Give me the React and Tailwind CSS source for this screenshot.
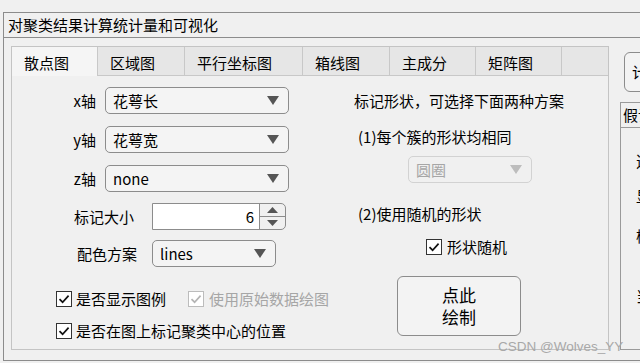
const FONT = { fontFamily: "'Noto Sans CJK SC', 'Noto Sans', sans-serif" }

function Arrow({ color = '#555' }) {
  return (
    <svg width="12" height="9" viewBox="0 0 12 9" className="shrink-0">
      <path d="M0 0 H12 L6 9 Z" fill={color} />
    </svg>
  )
}

function Dropdown({ value, width, disabled = false }) {
  return (
    <div
      className={`flex items-center justify-between h-[27px] rounded-[5px] border pl-[7px] pr-[9px] ${
        disabled ? 'border-[#d2d2d2] bg-[#f0f0f0] text-[#a6a6a6]' : 'border-[#8c8c8c] bg-[#f4f4f4] text-black'
      }`}
      style={{ width }}
    >
      <span className="leading-[20px]">{value}</span>
      <Arrow color={disabled ? '#bdbdbd' : '#555'} />
    </div>
  )
}

function Check({ disabled = false }) {
  return (
    <span
      className={`flex items-center justify-center w-[16px] h-[16px] shrink-0 border bg-white ${
        disabled ? 'border-[#bcbcbc]' : 'border-[#333]'
      }`}
    >
      <svg width="12" height="12" viewBox="0 0 12 12">
        <path d="M1.5 6.2 L4.6 9.2 L10.6 2.6" fill="none" stroke={disabled ? '#b4b4b4' : '#111'} strokeWidth="1.7" />
      </svg>
    </span>
  )
}

function Spinner() {
  return (
    <div className="flex h-[27px] w-[134px] border border-[#8c8c8c] rounded-r-[5px]">
      <div className="flex-1 bg-white flex items-center justify-end pr-[5px] leading-[20px]">6</div>
      <div className="w-[26px] flex flex-col border-l border-[#8c8c8c]">
        <div className="flex-1 flex items-center justify-center border-b border-[#8c8c8c]">
          <svg width="11" height="6" viewBox="0 0 11 6"><path d="M0 6 H11 L5.5 0 Z" fill="#555" /></svg>
        </div>
        <div className="flex-1 flex items-center justify-center">
          <svg width="11" height="6" viewBox="0 0 11 6"><path d="M0 0 H11 L5.5 6 Z" fill="#555" /></svg>
        </div>
      </div>
    </div>
  )
}

const tabs = [
  ['散点图', 86],
  ['区域图', 87],
  ['平行坐标图', 118],
  ['箱线图', 87],
  ['主成分', 86],
  ['矩阵图', 86],
]

function AxisRow({ label, value, top }) {
  return (
    <div className="flex items-center" style={{ marginTop: top }}>
      <span className="w-[84px] text-right leading-[20px]">{label}</span>
      <span className="ml-[9px]">
        <Dropdown value={value} width={184} />
      </span>
    </div>
  )
}

export default function App() {
  return (
    <div className="relative w-[640px] h-[363px] overflow-hidden bg-[#f0f0f0] text-black text-[15px]" style={FONT}>
      <div className="ml-[3px] mt-[12px] w-[700px] h-[349px] border border-[#8c8c8c] flex flex-col">
        {/* title */}
        <div className="h-[25px] border-b border-[#8c8c8c] pl-[4px] leading-[24px]">对聚类结果计算统计量和可视化</div>

        <div className="flex pt-[8px] pl-[7px]">
          {/* tab group */}
          <div className="w-[598px] h-[304px] border border-[#c4c4c4] flex flex-col shrink-0">
            <div className="flex h-[29px]">
              {tabs.map(([t, w], i) => (
                <div
                  key={t}
                  className={`flex items-center pl-[12px] pt-[3px] border-r border-[#c8c8c8] leading-[20px] ${
                    i === 0 ? 'bg-[#f5f5f5]' : 'bg-[#e6e6e6] border-b'
                  }`}
                  style={{ width: w }}
                >
                  {t}
                </div>
              ))}
              <div className="flex-1 bg-[#e6e6e6] border-b border-[#c8c8c8]" />
            </div>

            <div className="flex flex-1">
              {/* left column */}
              <div className="w-[328px] flex flex-col">
                <AxisRow label="x轴" value="花萼长" top={11} />
                <AxisRow label="y轴" value="花萼宽" top={12} />
                <AxisRow label="z轴" value="none" top={12} />

                <div className="flex items-center mt-[11px]">
                  <span className="ml-[62px] w-[78px] leading-[20px]">标记大小</span>
                  <Spinner />
                </div>

                <div className="flex items-center mt-[10px]">
                  <span className="ml-[65px] w-[75px] leading-[20px]">配色方案</span>
                  <Dropdown value="lines" width={124} />
                </div>

                <div className="flex items-center mt-[24px] ml-[44px] h-[16px]">
                  <Check />
                  <span className="ml-[4px] leading-[20px]">是否显示图例</span>
                  <span className="ml-[22px]">
                    <Check disabled />
                  </span>
                  <span className="ml-[5px] leading-[20px] text-[#a6a6a6] whitespace-nowrap">使用原始数据绘图</span>
                </div>

                <div className="flex items-center mt-[16px] ml-[44px] h-[16px]">
                  <Check />
                  <span className="ml-[4px] leading-[20px]">是否在图上标记聚类中心的位置</span>
                </div>
              </div>

              {/* right column */}
              <div className="flex flex-col">
                <div className="ml-[14px] mt-[15px] leading-[20px]">标记形状，可选择下面两种方案</div>
                <div className="ml-[18px] mt-[16px] leading-[20px]">(1)每个簇的形状均相同</div>
                <div className="ml-[68px] mt-[9px]">
                  <Dropdown value="圆圈" width={124} disabled />
                </div>
                <div className="ml-[18px] mt-[21px] leading-[20px]">(2)使用随机的形状</div>
                <div className="flex items-center ml-[86px] mt-[15px] h-[16px]">
                  <Check />
                  <span className="ml-[5px] leading-[20px]">形状随机</span>
                </div>
                <div className="ml-[57px] mt-[21px] w-[124px] h-[60px] border border-[#8c8c8c] rounded-[6px] bg-[#f3f3f3] flex items-center justify-center text-center text-[17px] leading-[22px]">
                  <span>
                    点此
                    <br />
                    绘制
                  </span>
                </div>
              </div>
            </div>
          </div>

          {/* right side, mostly off-screen */}
          <div className="ml-[11px] flex flex-col shrink-0">
            <div className="ml-[4px] mt-[6px] w-[80px] h-[40px] border border-[#8c8c8c] rounded-[6px] bg-[#f3f3f3] flex items-center pl-[7px] leading-[20px]">
              计算
            </div>
            <div className="mt-[10px] w-[80px] h-[248px] border border-[#9a9a9a] flex flex-col">
              <div className="h-[25px] border-b border-[#9a9a9a] pl-[2px] leading-[24px]">假设</div>
              <div className="pl-[15px] flex flex-col leading-[20px]">
                <span className="mt-[23px]">选</span>
                <span className="mt-[15px]">显</span>
                <span className="mt-[20px]">检</span>
                <span className="mt-[40px]">当</span>
              </div>
            </div>
          </div>
        </div>
      </div>

      <div
        className="absolute left-[498px] top-[338px] text-[13.5px] leading-[18px] text-[#a8a8a8] whitespace-nowrap"
        style={{ fontFamily: "'Liberation Sans', Arial, sans-serif" }}
      >
        CSDN @Wolves_YY
      </div>
    </div>
  )
}
